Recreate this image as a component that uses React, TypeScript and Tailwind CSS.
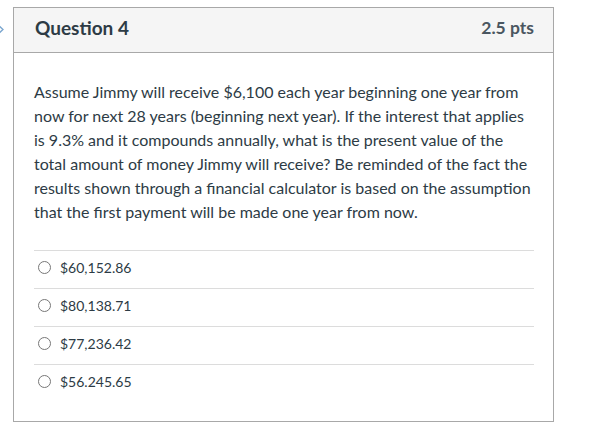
import React from 'react';

const answers = ['$60,152.86', '$80,138.71', '$77,236.42', '$56.245.65'];

const App: React.FC = () => {
  return (
    <div className="relative min-h-screen bg-white font-['Lato','Liberation_Sans',sans-serif] text-[#2d3b45]">
      {/* side chevron, mostly off screen */}
      <svg className="absolute left-[-6px] top-[23px]" width="11" height="13" viewBox="0 0 11 13" fill="none">
        <path d="M3 1l6 5.5L3 12" stroke="#7aa6cf" strokeWidth="1.3" />
      </svg>

      <div className="ml-[13px] pt-[7px]">
        <div className="w-[541px] h-[415px] border border-[#a8a8a8] bg-white">
          <div className="flex h-[45px] items-center justify-between border-b border-[#a8a8a8] bg-[#f5f5f5] pb-[3px] pl-[21px] pr-[19px]">
            <h2 className="text-[19px] font-bold">Question 4</h2>
            <span className="text-[17.5px] font-bold text-[#4a5660]">2.5 pts</span>
          </div>

          <div className="px-[20px] pt-[27px]">
            <p className="w-[502px] text-[16px] leading-[24px]">
              Assume Jimmy will receive $6,100 each year beginning one year from now for next 28 years
              (beginning next year). If the interest that applies is 9.3% and it compounds annually, what
              is the present value of the total amount of money Jimmy will receive? Be reminded of the fact
              the results shown through a financial calculator is based on the assumption that the first
              payment will be made one year from now.
            </p>

            <div className="mt-[26px] w-[500px]">
              {answers.map((a) => (
                <label key={a} className="flex h-[38px] items-center border-t border-[#dcdcdc] pb-[4px] pl-[4px] text-[14px]">
                  <span className="h-[13px] w-[13px] rounded-full border border-[#777] bg-white" />
                  <span className="ml-[9px]">{a}</span>
                </label>
              ))}
            </div>
          </div>
        </div>
      </div>
    </div>
  );
};

export default App;
